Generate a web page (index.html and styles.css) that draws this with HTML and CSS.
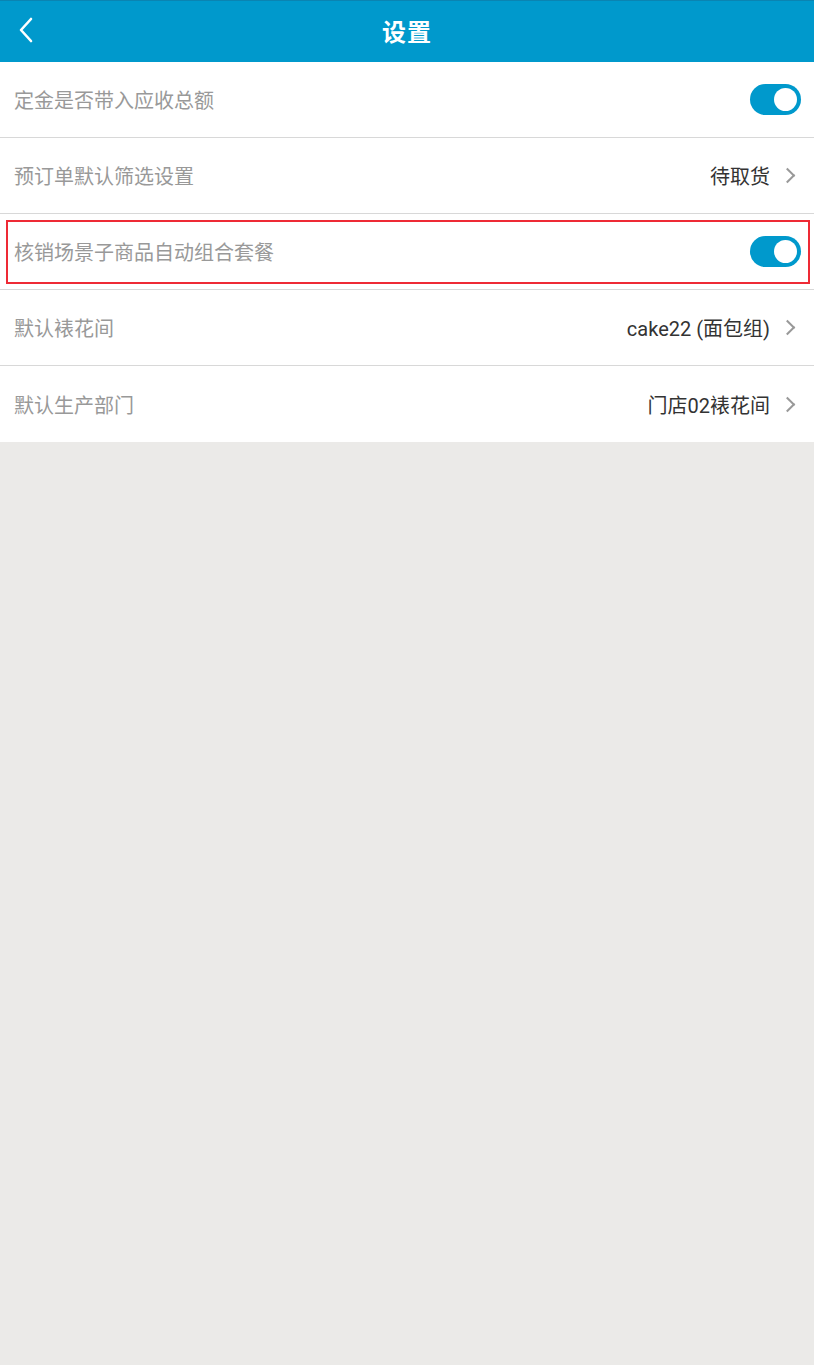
FILE: index.html
```html
<!DOCTYPE html>
<html lang="zh-CN">
<head>
  <meta charset="UTF-8" />
  <meta name="viewport" content="width=device-width, initial-scale=1.0"/>
  <title>设置</title>
  <link rel="stylesheet" href="styles.css">
</head>
<body>
  <header class="topbar">
    <a class="back" href="#">
      <svg width="16" height="26" viewBox="0 0 16 26"><path d="M13 2 L3 13 L13 24" fill="none" stroke="#fff" stroke-width="2.6" stroke-linecap="round" stroke-linejoin="round"/></svg>
    </a>
    <h1>设置</h1>
  </header>

  <ul class="settings">
    <li class="row">
      <span class="label">定金是否带入应收总额</span>
      <span class="switch on"></span>
    </li>
    <li class="row">
      <span class="label">预订单默认筛选设置</span>
      <span class="value">待取货</span>
      <span class="arrow"></span>
    </li>
    <li class="row">
      <div class="highlight">
        <span class="label">核销场景子商品自动组合套餐</span>
        <span class="switch on"></span>
      </div>
    </li>
    <li class="row">
      <span class="label">默认裱花间</span>
      <span class="value">cake22 (面包组)</span>
      <span class="arrow"></span>
    </li>
    <li class="row">
      <span class="label">默认生产部门</span>
      <span class="value">门店02裱花间</span>
      <span class="arrow"></span>
    </li>
  </ul>
</body>
</html>
```

FILE: styles.css
```css
html, body {
  margin: 0;
  padding: 0;
  height: 100%;
}

body {
  background: #ebeae8;
  font-family: Roboto, "Noto Sans CJK SC", sans-serif;
}

.topbar {
  height: 62px;
  background: #0099cc;
  border-top: 1px solid #0a84b2;
  box-sizing: border-box;
  display: flex;
  align-items: center;
  justify-content: center;
  padding-bottom: 3px;
  position: relative;
}

.back {
  position: absolute;
  left: 18px;
  top: 16px;
  display: block;
  line-height: 0;
}

.topbar h1 {
  margin: 0;
  color: #fff;
  font-size: 24px;
  font-weight: bold;
  letter-spacing: 1px;
}

.settings {
  list-style: none;
  margin: 0;
  padding: 0;
  background: #fff;
}

.row {
  height: 76px;
  display: flex;
  align-items: center;
  padding: 0 13px 0 14px;
  border-bottom: 1px solid #d8d8d8;
  box-sizing: border-box;
  font-size: 20px;
}

.row:last-child {
  border-bottom: none;
}

.row:nth-child(3) {
  padding: 0 4px 0 6px;
}

.highlight {
  flex: 1;
  height: 64px;
  border: 2px solid #ee2a35;
  box-sizing: border-box;
  display: flex;
  align-items: center;
  padding: 0 7px 0 6px;
}

.label {
  flex: 1;
  color: #999;
}

.value {
  color: #333;
}

.arrow {
  width: 9px;
  height: 9px;
  border-top: 2px solid #999;
  border-right: 2px solid #999;
  transform: rotate(45deg);
  margin: 0 8px 0 12px;
}

.switch {
  width: 51px;
  height: 31px;
  border-radius: 16px;
  background: #0099cc;
  position: relative;
}

.switch::after {
  content: "";
  position: absolute;
  right: 4px;
  top: 4px;
  width: 23px;
  height: 23px;
  border-radius: 50%;
  background: #fff;
}
```
